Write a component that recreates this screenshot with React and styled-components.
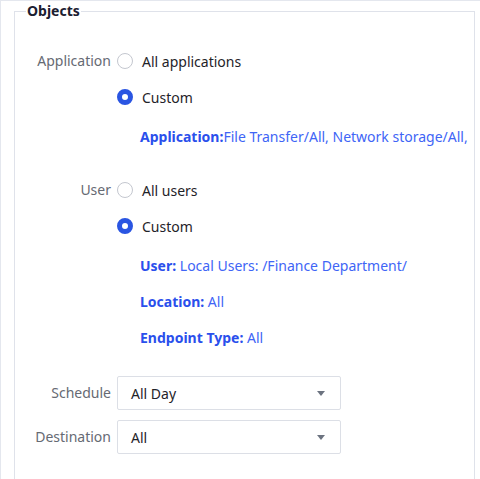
import React from 'react';
import styled, { createGlobalStyle } from 'styled-components';

const GlobalStyle = createGlobalStyle`
    html, body {
        margin: 0;
        padding: 0;
        background: #fff;
    }
    body {
        font-family: "Noto Sans", "Liberation Sans", Arial, sans-serif;
        font-size: 14px;
    }
`;

const Page = styled.div`
    height: 479px;
    box-sizing: border-box;
    border-top: 1px solid #e4e7ee;
    border-left: 1px solid #e4e7ee;
    padding: 0 5px 0 13px;
    overflow: hidden;
`;

const Fieldset = styled.fieldset`
    margin: 0;
    padding: 10px 0 40px;
    border: 1px solid #dfe2ea;
    min-width: 0;
    overflow: hidden;
`;

const Legend = styled.legend`
    margin-left: 11px;
    padding: 0 1px;
    font-size: 14px;
    font-weight: bold;
    line-height: 20px;
    color: #1b2030;
`;

const FormItem = styled.div`
    display: flex;
    align-items: flex-start;
    margin-top: ${(p) => p.$top || 0}px;
`;

const Label = styled.div`
    flex: 0 0 96px;
    padding-right: 6px;
    text-align: right;
    line-height: ${(p) => (p.$select ? '34px' : '20px')};
    color: #666a73;
    white-space: nowrap;
`;

const Content = styled.div`
    flex: 1;
    min-width: 0;
    display: flex;
    flex-direction: column;
    gap: 16px;
`;

const RadioLine = styled.label`
    display: flex;
    align-items: center;
    gap: 9px;
    height: 20px;
    color: #1f2329;
`;

const RadioDot = styled.span`
    box-sizing: border-box;
    width: 16px;
    height: 16px;
    border-radius: 50%;
    border: ${(p) => (p.$checked ? '5px solid #2a55e2' : '1px solid #c4c7cf')};
    background: #fff;
    flex: none;
`;

const Details = styled.div`
    display: flex;
    flex-direction: column;
    gap: 16px;
    margin-top: 4px;
    padding-left: 23px;
`;

const Detail = styled.div`
    line-height: 20px;
    white-space: nowrap;
    color: #4065f6;
`;

const Key = styled.b`
    color: #2a4fec;
    font-weight: bold;
`;

const Select = styled.div`
    box-sizing: border-box;
    width: 224px;
    height: 34px;
    border: 1px solid #dcdfe6;
    border-radius: 2px;
    padding: 0 15px 0 13px;
    display: flex;
    align-items: center;
    justify-content: space-between;
    color: #1f2329;
`;

const Caret = styled.span`
    width: 0;
    height: 0;
    border-left: 4px solid transparent;
    border-right: 4px solid transparent;
    border-top: 5px solid #6c7380;
`;

const Radio = ({ checked, children }) => (
    <RadioLine>
        <RadioDot $checked={checked} />
        {children}
    </RadioLine>
);

export default function App() {
    return (
        <>
            <GlobalStyle />
            <Page>
                <Fieldset>
                    <Legend>Objects</Legend>

                    <FormItem $top={20}>
                        <Label>Application</Label>
                        <Content>
                            <Radio>All applications</Radio>
                            <Radio checked>Custom</Radio>
                            <Details>
                                <Detail>
                                    <Key>Application:</Key>File Transfer/All, Network storage/All,
                                </Detail>
                            </Details>
                        </Content>
                    </FormItem>

                    <FormItem $top={33}>
                        <Label>User</Label>
                        <Content>
                            <Radio>All users</Radio>
                            <Radio checked>Custom</Radio>
                            <Details>
                                <Detail>
                                    <Key>User:</Key> Local Users: /Finance Department/
                                </Detail>
                                <Detail>
                                    <Key>Location:</Key> All
                                </Detail>
                                <Detail>
                                    <Key>Endpoint Type:</Key> All
                                </Detail>
                            </Details>
                        </Content>
                    </FormItem>

                    <FormItem $top={28}>
                        <Label $select>Schedule</Label>
                        <Select>
                            All Day
                            <Caret />
                        </Select>
                    </FormItem>

                    <FormItem $top={10}>
                        <Label $select>Destination</Label>
                        <Select>
                            All
                            <Caret />
                        </Select>
                    </FormItem>
                </Fieldset>
            </Page>
        </>
    );
}
